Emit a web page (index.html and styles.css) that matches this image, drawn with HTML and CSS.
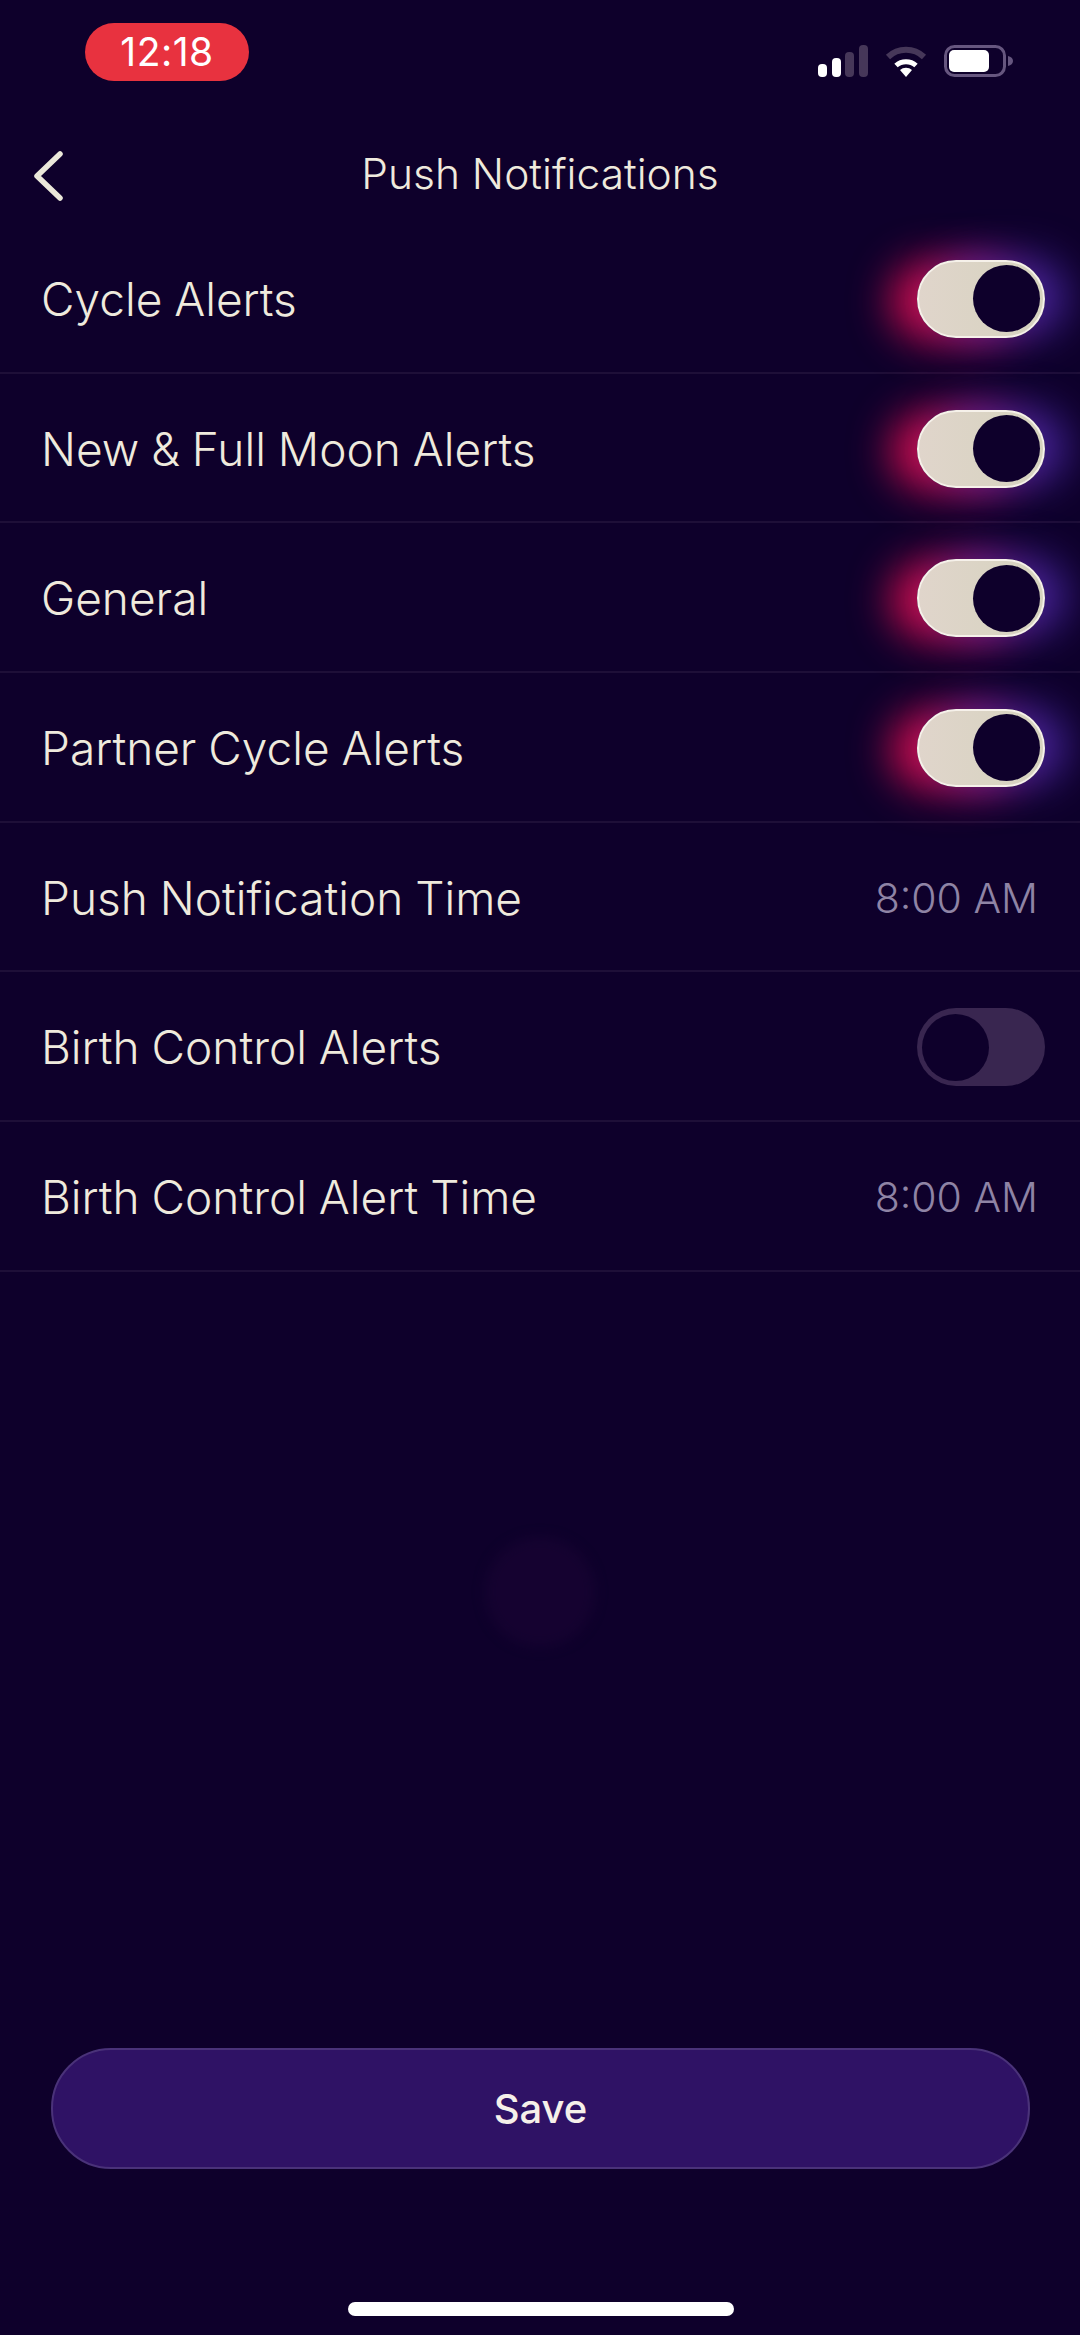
FILE: index.html
```html
<!DOCTYPE html>
<html lang="en">
<head>
<meta charset="utf-8">
<title>Push Notifications</title>
<link rel="stylesheet" href="styles.css">
</head>
<body>
<div class="app">
  <div class="status">
    <div class="time">12:18</div>
    <div class="status-icons">
      <svg class="sig" width="50" height="32" viewBox="0 0 50 32"><rect x="0" y="19" width="9" height="13" rx="4" fill="#fff"/><rect x="14" y="13" width="9" height="19" rx="4" fill="#fff"/><rect x="27" y="7" width="9" height="25" rx="4" fill="#463759"/><rect x="41" y="0" width="9" height="32" rx="4" fill="#463759"/></svg>
      <svg class="wifi" width="42" height="31" viewBox="0 0 42 31"><path d="M21 31 15 24a9 9 0 0 1 12 0Z" fill="#fff"/><path d="M11 19.500a15 15 0 0 1 20 0" fill="none" stroke="#fff" stroke-width="5"/><path d="M3 11a26 26 0 0 1 36 0" fill="none" stroke="#463759" stroke-width="6"/></svg>
      <svg class="batt" width="69" height="32" viewBox="0 0 69 32"><rect x="1.500" y="1.500" width="59" height="29" rx="9" fill="none" stroke="#66567f" stroke-width="3"/><rect x="5" y="5" width="40" height="22" rx="5" fill="#fff"/><path d="M64 11c3 .5 5 2.500 5 5s-2 4.500-5 5Z" fill="#66567f"/></svg>
    </div>
  </div>
  <header class="header">
    <svg class="back" width="30" height="50" viewBox="0 0 30 50"><path d="M27 3 4 25l23 22" fill="none" stroke="#ebe8da" stroke-width="5.500" stroke-linecap="round" stroke-linejoin="round"/></svg>
    <h1 class="title">Push Notifications</h1>
  </header>
  <ul class="list">
    <li class="row"><span>Cycle Alerts</span><span class="toggle on"><i class="knob"></i></span></li>
    <li class="row"><span>New &amp; Full Moon Alerts</span><span class="toggle on"><i class="knob"></i></span></li>
    <li class="row"><span>General</span><span class="toggle on"><i class="knob"></i></span></li>
    <li class="row"><span>Partner Cycle Alerts</span><span class="toggle on"><i class="knob"></i></span></li>
    <li class="row"><span>Push Notification Time</span><span class="value">8:00 AM</span></li>
    <li class="row"><span>Birth Control Alerts</span><span class="toggle off"><i class="knob"></i></span></li>
    <li class="row"><span>Birth Control Alert Time</span><span class="value">8:00 AM</span></li>
  </ul>
  <div class="spacer"><div class="blob"></div></div>
  <button class="save">Save</button>
  <div class="home"></div>
</div>
</body>
</html>
```
FILE: styles.css
```css
* { box-sizing: border-box; }
html, body { margin: 0; padding: 0; background: #0e002b; }
.app {
  width: 1080px;
  height: 2335px;
  display: flex;
  flex-direction: column;
  overflow: hidden;
  background: #0e002b;
  color: #efeadd;
  font-family: "Inter", "Liberation Sans", sans-serif;
}
.status {
  height: 125px;
  padding: 23px 67px 0 85px;
  display: flex;
  justify-content: space-between;
  align-items: flex-start;
}
.time {
  width: 164px;
  height: 58px;
  border-radius: 29px;
  background: #e8323f;
  color: #fff;
  font: 400 39px/58px "Inter", "Liberation Sans", sans-serif;
  letter-spacing: .5px;
  text-align: center;
}
.status-icons {
  display: flex;
  align-items: flex-end;
  gap: 17px;
  margin-top: 22px;
}
.header {
  height: 99px;
  position: relative;
  display: flex;
  align-items: center;
  justify-content: center;
}
.back { position: absolute; left: 33px; top: 26px; }
.title {
  margin: 0 0 2px;
  font-size: 42.500px;
  font-weight: 300;
  line-height: 50px;
}
.list { list-style: none; margin: 0; padding: 0; }
.row {
  height: 149.7px;
  padding: 2px 42px 0 41px;
  display: flex;
  align-items: center;
  justify-content: space-between;
  border-bottom: 2px solid #1e0f38;
  font-size: 46px;
  font-weight: 300;
  word-spacing: -1px;
}
.value { color: #8f84a5; font-size: 41px; word-spacing: 0; }
.toggle {
  width: 128px;
  height: 78px;
  margin-right: -7px;
  border-radius: 39px;
  display: flex;
  align-items: center;
  padding: 0 5px;
}
.toggle.on {
  justify-content: flex-end;
  padding: 0 3px;
  background: linear-gradient(90deg, #e0d5cb, #d6d3bf);
  border: 2px solid #f6f1ea;
  box-shadow: 22px -2px 42px 0 rgba(70, 36, 155, .95), -26px 2px 42px 0 rgba(210, 14, 78, 1);
}
.toggle.off { background: #392650; }
.knob { display: block; width: 67px; height: 67px; border-radius: 50%; background: #0e002b; }
.spacer { flex: 1; display: flex; justify-content: center; padding-top: 265px; }
.blob {
  width: 110px;
  height: 110px;
  border-radius: 50%;
  background: #150230;
  filter: blur(6px);
}
.save {
  display: block;
  width: 979px;
  height: 121px;
  margin-left: 51px;
  border-radius: 60px;
  border: 2px solid #4a3279;
  background: #2f1265;
  color: #f6f0ea;
  font: 500 40px/1 "Inter", "Liberation Sans", sans-serif;
}
.home {
  width: 386px;
  height: 14px;
  margin: 133px 0 19px 348px;
  border-radius: 7px;
  background: #fff;
}
```
